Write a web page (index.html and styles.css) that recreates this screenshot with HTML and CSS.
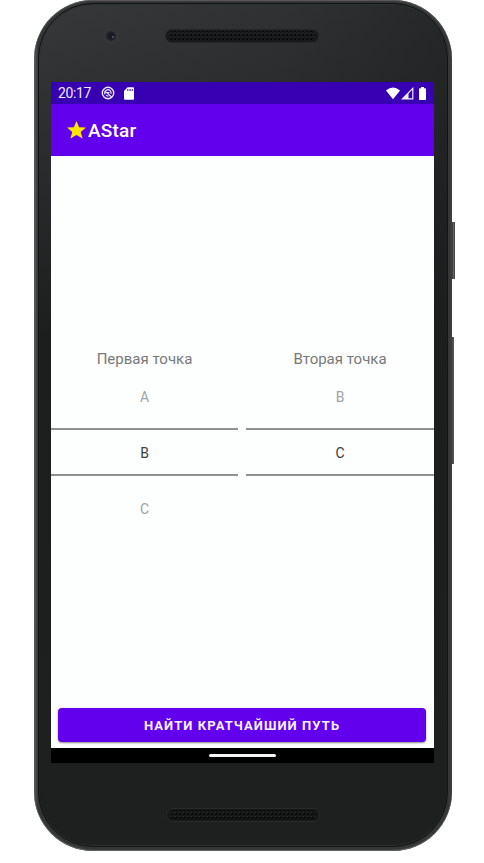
FILE: index.html
```
<!DOCTYPE html>
<html lang="ru">
<head>
<meta charset="utf-8">
<title>AStar</title>
<link rel="stylesheet" href="styles.css">
</head>
<body>
<div class="phone">
  <span class="side-key power"></span>
  <span class="side-key volume"></span>
  <div class="face">
    <header class="bezel bezel-top">
      <span class="camera"></span>
      <svg class="speaker" width="154" height="14" viewBox="0 0 154 14"><defs><pattern id="holes" width="4" height="4" patternUnits="userSpaceOnUse"><rect x="1" y="1" width="2" height="2" fill="#090a0a"/><rect x="1" y="0" width="1" height="1" fill="#303234"/></pattern></defs><rect x=".5" y=".5" width="153" height="13" rx="6.5" fill="#17191a" stroke="#242728"/><rect x="4" y="2" width="146" height="10" rx="4" fill="url(#holes)"/></svg>
    </header>
    <main class="screen">
      <div class="status">
        <span class="time">20:17</span>
        <svg class="sync" width="14" height="14" viewBox="0 0 14 14" fill="none" stroke="#eee9fa"><circle cx="7" cy="7" r="5.7" stroke-width="1.4"/><path d="M4 8.2A3.2 3.2 0 0 1 9.3 4.8Q10.4 6 10 7.8M4.2 5.4L10.6 11M5 9.2Q6 10.2 7.4 10.1M6.4 6.6h2" stroke-width="1.2"/></svg>
        <svg class="card" width="10" height="13" viewBox="0 0 10 13"><path d="M3.6.3H9q1 0 1 1v10.4q0 1-1 1H1q-1 0-1-1V4z" fill="#fff"/><path d="M3.8 2v2M6 2v2M8.2 2v2" stroke="#3700b3" stroke-width="1"/></svg>
        <svg class="wifi" width="14" height="13" viewBox="0 0 14 13"><path d="M0 3.5Q7-2.6 14 3.5L7 12.3z" fill="#fff"/></svg>
        <svg class="signal" width="13" height="13" viewBox="0 0 13 13"><path d="M1.4 11.9L11.8 1.4V11.9z" fill="none" stroke="#f1edfc" stroke-width="1.2"/><path d="M1 12L7.5 5.5V12z" fill="#f1edfc"/></svg>
        <svg class="battery" width="7" height="13" viewBox="0 0 7 13"><path d="M2 0h3v1.3h1.2q.8 0 .8.8v10q0 .9-.8.9H.8q-.8 0-.8-.9v-10q0-.8.8-.8H2z" fill="#fff"/></svg>
      </div>
      <div class="appbar">
        <svg class="star" width="19" height="18" viewBox="0 0 18 18" preserveAspectRatio="none"><path d="M9 0l2.5 6.2 6.5.4-5 4.3 1.8 6.6L9 14l-5.8 3.5L5 10.9 0 6.6l6.5-.4z" fill="#ffe500"/></svg>
        <h1>AStar</h1>
      </div>
      <div class="content">
        <div class="pickers">
          <section class="picker">
            <h2>Первая точка</h2>
            <div class="option">A</div>
            <div class="option selected">B</div>
            <div class="option">C</div>
          </section>
          <section class="picker">
            <h2>Вторая точка</h2>
            <div class="option">B</div>
            <div class="option selected">C</div>
            <div class="option"></div>
          </section>
        </div>
        <button class="find">НАЙТИ КРАТЧАЙШИЙ ПУТЬ</button>
      </div>
      <div class="nav"><span></span></div>
    </main>
    <footer class="bezel bezel-bottom">
      <svg class="speaker" width="154" height="14" viewBox="0 0 154 14"><rect x=".5" y=".5" width="153" height="13" rx="6.5" fill="#151716" stroke="#292c2b"/><rect x="4" y="2" width="146" height="10" rx="4" fill="url(#holes)"/></svg>
    </footer>
  </div>
</div>
</body>
</html>
```
FILE: styles.css
```
* { box-sizing: border-box; }
body { margin: 0; background: #fff; font-family: Roboto, "Liberation Sans", sans-serif; }
h1, h2 { margin: 0; }
svg { display: block; flex: none; }
.phone {
  position: relative;
  width: 418px;
  height: 851px;
  margin-left: 34px;
  padding: 3px 4px 4px;
  border-radius: 59px;
  background: linear-gradient(90deg, #5c5e5e 0, #343636 4px, #343636 414px, #3d3a3a 417px, #383535 418px);
  box-shadow: inset 0 1px 1px #5c5e5d, inset 0 -1px 1px #666;
}
.face {
  display: flex;
  flex-direction: column;
  height: 844px;
  padding: 0 12px;
  border: 1px solid #111313;
  border-radius: 55px;
  background:
    linear-gradient(180deg, transparent 0, #1c1e1e 40%, #1e201f 100%),
    linear-gradient(100deg, #36383a 0, #2f3132 45%, #232526 80%, #1e2021 100%);
  box-shadow: inset 0 1px 1px #303333, inset 0 -1px 1px #303333;
}
.side-key { position: absolute; background: linear-gradient(90deg, #333 0, #696969 60%, #353535 100%); }
.power { left: 418px; top: 222px; width: 3px; height: 57px; }
.volume { left: 418px; top: 337px; width: 2px; height: 127px; }
.bezel { display: flex; flex: none; }
.bezel-top { height: 78px; padding: 24px 0 0 52px; }
.camera {
  width: 16px;
  height: 16px;
  border-radius: 50%;
  background: radial-gradient(circle at 10px 9px, #6b4a60 0 .5px, transparent 1.5px), radial-gradient(circle at 8px 8px, #1a1b22 0 3px, #2b2d2f 5px, #35383a 6px 7px, #313335 8px);
}
.bezel-top .speaker { margin: 1px 0 0 46px; }
.bezel-bottom { padding: 45px 0 0 115px; }
.screen { display: flex; flex: none; flex-direction: column; width: 383px; height: 681px; background: #fdfefe; }
.status { display: flex; align-items: center; height: 22px; padding: 0 8px 0 7px; background: #3700b3; color: #eeeafa; }
.time { width: 43px; font-size: 14px; line-height: 23px; letter-spacing: -.4px; }
.card { margin-left: 9px; }
.wifi { margin-left: auto; }
.signal { margin-left: 1px; }
.battery { margin-left: 5px; }
.appbar { display: flex; align-items: center; height: 52px; padding: 1px 0 0 16px; background: #6200ee; color: #fff; }
.star { margin-bottom: 2px; }
.appbar h1 { margin-left: 2px; font-size: 19px; font-weight: 500; line-height: 26px; letter-spacing: .2px; }
.content { display: flex; flex: 1; flex-direction: column; justify-content: space-between; padding-top: 192px; }
.pickers { display: grid; grid-template-columns: 187px 188px; column-gap: 8px; }
.picker { text-align: center; color: #a1a2a2; font-size: 14px; }
.picker h2 { height: 21px; color: #777979; font-size: 15px; font-weight: 400; line-height: 22px; }
.option { height: 59px; line-height: 56px; }
.option.selected { height: 48px; border: solid #8f9090; border-width: 2px 0; color: #3d3d3d; line-height: 46px; }
.selected + .option { line-height: 66px; }
.find {
  height: 34px;
  margin: 0 8px 6px 7px;
  padding: 0;
  border: 0;
  border-radius: 4px;
  background: #6200ee;
  box-shadow: 0 1px 2px #0007;
  color: #f6f0ff;
  font: 700 13px/36px Roboto, "Liberation Sans", sans-serif;
  letter-spacing: 1.06px;
}
.nav { display: flex; align-items: center; justify-content: center; height: 15px; background: #000; }
.nav span { width: 67px; height: 3px; border-radius: 2px; background: #f4f4f4; }
```
